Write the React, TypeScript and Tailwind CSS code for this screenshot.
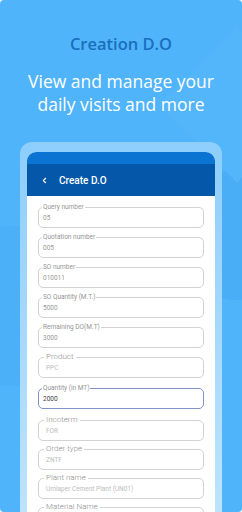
import { ChevronLeft } from "lucide-react";

type Field = {
  label: string;
  value: string;
  kind: "plain" | "select" | "focus";
};

const fields: Field[] = [
  { label: "Query number", value: "05", kind: "plain" },
  { label: "Quotation number", value: "005", kind: "plain" },
  { label: "SO number", value: "010011", kind: "plain" },
  { label: "SO Quantity  (M.T.)", value: "5000", kind: "plain" },
  { label: "Remaining DO(M.T)", value: "3000", kind: "plain" },
  { label: "Product", value: "PPC", kind: "select" },
  { label: "Quantity (in MT)", value: "2000", kind: "focus" },
  { label: "Incoterm", value: "FOR", kind: "select" },
  { label: "Order type", value: "ZNTF", kind: "select" },
  { label: "Plant name", value: "Umlaper Cement Plant (UN01)", kind: "select" },
  { label: "Material Name", value: "", kind: "select" },
];

const FieldBox = ({ f }: { f: Field }) => {
  const border =
    f.kind === "focus" ? "border-[#8193c4]" : "border-[#d2d2d2]";
  return (
    <div className={`relative h-[21px] shrink-0 rounded-[5px] border ${border}`}>
      {f.kind === "select" ? (
        <span className="absolute -top-[6px] left-[5px] bg-white px-[2px] text-[8px] font-light leading-[10px] text-[#8c8c8c]">
          {f.label}
        </span>
      ) : (
        <span className="absolute -top-[5px] left-[3px] bg-white px-[1px] text-[6.5px] font-normal leading-[8px] text-[#959595]">
          {f.label}
        </span>
      )}
      <div
        className={`flex h-full items-center pt-[3px] text-[6.5px] ${
          f.kind === "select" ? "pl-[7px] text-[#bdbdbd]" : "pl-[4px]"
        } ${f.kind === "focus" ? "text-[#444]" : ""} ${f.kind === "plain" ? "text-[#999]" : ""}`}
      >
        {f.value}
      </div>
    </div>
  );
};

export default function App() {
  return (
    <div className="h-[512px] w-[242px] bg-white">
      <div
        className="relative flex h-[512px] w-[242px] flex-col items-center overflow-hidden rounded-[4px] bg-[#50b4fa]"
        style={{ fontFamily: "'Open Sans', sans-serif" }}
      >
        {/* soft background shapes */}
        <div className="absolute -left-[70px] top-[226px] h-[160px] w-[160px] rounded-full bg-[#4bb0f7]" />
        <div className="absolute -right-[60px] top-[170px] h-[130px] w-[130px] rounded-full bg-[#4aaef6]" />
        <div className="absolute -right-[50px] top-[50px] h-[110px] w-[110px] rotate-45 bg-[#53b6fa]" />

        <h1 className="relative mt-[33px] text-[16.5px] font-semibold leading-[22px] text-[#1a6fbd]">
          Creation D.O
        </h1>
        <p className="relative mt-[15px] text-center text-[17.5px] leading-[23px] text-white">
          View and manage your
          <br />
          daily visits and more
        </p>

        <div className="relative mt-[26px] w-[202px] flex-1 rounded-t-[12px] bg-gradient-to-b from-[#8dcefc] to-[#bfe4fd] px-[7px] pt-[10px]">
          <div
            className="flex h-full flex-col overflow-hidden rounded-t-[9px] bg-white"
            style={{ fontFamily: "Roboto, sans-serif" }}
          >
            <div className="h-[12px] shrink-0 bg-[#0b74d2]" />
            <div className="flex h-[32px] shrink-0 items-center bg-[#0557a9] text-white">
              <ChevronLeft className="ml-[13px] h-[9px] w-[9px]" strokeWidth={3} />
              <span className="ml-[10px] text-[10px] font-medium">Create D.O</span>
            </div>
            <div className="flex flex-col gap-[9px] px-[11px] pt-[11px]">
              {fields.slice(0, 6).map((f) => (
                <FieldBox key={f.label} f={f} />
              ))}
              <div className="mt-[1px]">
                <FieldBox f={fields[6]} />
              </div>
              <div className="mt-[2px] flex flex-col gap-[8px]">
                {fields.slice(7).map((f) => (
                  <FieldBox key={f.label} f={f} />
                ))}
              </div>
            </div>
          </div>
        </div>
      </div>
    </div>
  );
}
